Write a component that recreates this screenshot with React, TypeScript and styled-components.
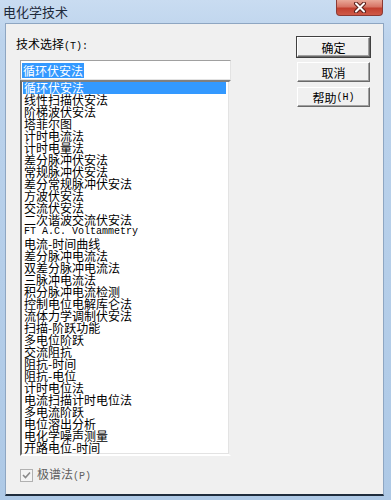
import { FC } from 'react';
import styled, { createGlobalStyle } from 'styled-components';

const GlobalStyle = createGlobalStyle`
    html, body {
        margin: 0;
        padding: 0;
        background: #6f8ba6;
    }
`;

const CJK = `"Noto Sans CJK SC", "DejaVu Sans", sans-serif`;

const Window = styled.div`
    width: 391px;
    height: 500px;
    box-sizing: border-box;
    display: flex;
    flex-direction: column;
    background: linear-gradient(180deg, #c9dcf1 0px, #bcd3ec 40px, #aec9e6 100%);
    font-family: ${CJK};
    overflow: hidden;
`;

const TitleBar = styled.div`
    height: 23px;
    display: flex;
    justify-content: space-between;
    align-items: flex-start;
    flex-shrink: 0;
`;

const Title = styled.span`
    font-size: 13px;
    line-height: 13px;
    color: #1e2a3a;
    margin: 5px 0 0 3px;
`;

const CloseButton = styled.div`
    width: 45px;
    height: 15px;
    margin-right: 8px;
    border: 1px solid #8c3a33;
    border-top: none;
    border-radius: 0 0 4px 4px;
    background: linear-gradient(180deg, #e9a898 0%, #d77566 45%, #c2402f 55%, #cf5a48 100%);
    display: flex;
    align-items: center;
    justify-content: center;
`;

const FrameBody = styled.div`
    display: flex;
    flex: 1;
    padding: 0 7px 0 5px;
`;

const Client = styled.div`
    flex: 1;
    height: 473px;
    box-sizing: border-box;
    background: #f0f0f0;
    border: 1px solid #8ea6c2;
    border-bottom: 2px solid #1f2d3d;
    display: flex;
    padding: 13px 0 0 10px;
`;

const LeftColumn = styled.div`
    width: 215px;
    display: flex;
    flex-direction: column;
`;

const Label = styled.div`
    font-size: 12px;
    line-height: 13px;
    height: 13px;
    color: #000;
`;

const Half = styled.span`
    font-family: "Liberation Mono", "DejaVu Sans Mono", monospace;
    font-size: 10px;
`;

const EditBox = styled.div`
    margin: 10px 0 0 4px;
    width: 211px;
    height: 20px;
    box-sizing: border-box;
    background: #fff;
    border: 1px solid;
    border-color: #a0a0a0 #e3e3e3 #e3e3e3 #a0a0a0;
    display: flex;
    align-items: center;
    padding-left: 1px;
`;

const Selected = styled.span`
    background: #3399ff;
    color: #fff;
    font-size: 12px;
    line-height: 15px;
    height: 15px;
    padding: 0 1px;
`;

const ListBox = styled.div`
    margin-left: 4px;
    width: 211px;
    height: 376px;
    box-sizing: border-box;
    background: #fff;
    border: 2px solid;
    border-color: #808080 #f0f0f0 #ffffff #696969;
    box-shadow: inset -1px -1px 0 #e3e3e3;
    display: flex;
    flex-direction: column;
    padding: 0 3px 0 1px;
    overflow: hidden;
`;

const Item = styled.div<{ $active?: boolean }>`
    height: 12px;
    line-height: 12px;
    font-size: 12px;
    padding-left: 1px;
    white-space: nowrap;
    color: ${p => (p.$active ? '#fff' : '#000')};
    background: ${p => (p.$active ? '#3399ff' : 'transparent')};
`;

const LatinItem = styled(Item)`
    font-family: "Liberation Mono", "DejaVu Sans Mono", monospace;
    font-size: 10px;
`;

const CheckRow = styled.div`
    margin: 11px 0 0 4px;
    display: flex;
    align-items: center;
    gap: 4px;
    color: #5f5f5f;
    font-size: 12px;
    line-height: 13px;
`;

const CheckBox = styled.div`
    width: 11px;
    height: 11px;
    border: 1px solid #b1b1b1;
    background: #f4f4f4;
    display: flex;
    align-items: center;
    justify-content: center;
`;

const ButtonColumn = styled.div`
    margin-left: 66px;
    display: flex;
    flex-direction: column;
    gap: 5px;
`;

const Button = styled.div<{ $default?: boolean }>`
    width: 73px;
    height: 20px;
    box-sizing: border-box;
    display: flex;
    align-items: center;
    justify-content: center;
    font-size: 12px;
    color: #000;
    background: #f0f0f0;
    border: 1px solid;
    border-color: #ffffff #696969 #696969 #ffffff;
    box-shadow: ${p => (p.$default ? '0 0 0 1px #404040, inset -1px -1px 0 #a0a0a0' : 'inset -1px -1px 0 #a0a0a0')};
`;

const items = [
    '循环伏安法',
    '线性扫描伏安法',
    '阶梯波伏安法',
    '塔菲尔图',
    '计时电流法',
    '计时电量法',
    '差分脉冲伏安法',
    '常规脉冲伏安法',
    '差分常规脉冲伏安法',
    '方波伏安法',
    '交流伏安法',
    '二次谐波交流伏安法',
    'FT A.C. Voltammetry',
    '电流-时间曲线',
    '差分脉冲电流法',
    '双差分脉冲电流法',
    '三脉冲电流法',
    '积分脉冲电流检测',
    '控制电位电解库仑法',
    '流体力学调制伏安法',
    '扫描-阶跃功能',
    '多电位阶跃',
    '交流阻抗',
    '阻抗-时间',
    '阻抗-电位',
    '计时电位法',
    '电流扫描计时电位法',
    '多电流阶跃',
    '电位溶出分析',
    '电化学噪声测量',
    '开路电位-时间',
];

export default function App() {
    return (
        <>
            <GlobalStyle />
            <Window>
                <TitleBar>
                    <Title>电化学技术</Title>
                    <CloseButton>
                        <svg width="14" height="11" viewBox="0 0 14 11">
                            <path d="M3 1.5 L11 9.5 M11 1.5 L3 9.5" stroke="#5a1f1a" strokeWidth="4" strokeLinecap="round" />
                            <path d="M3 1.5 L11 9.5 M11 1.5 L3 9.5" stroke="#ffffff" strokeWidth="2" strokeLinecap="round" />
                        </svg>
                    </CloseButton>
                </TitleBar>
                <FrameBody>
                    <Client>
                        <LeftColumn>
                            <Label>技术选择<Half>(T):</Half></Label>
                            <EditBox>
                                <Selected>循环伏安法</Selected>
                            </EditBox>
                            <ListBox>
                                {items.map((name, i) =>
                                    /^[A-Z]/.test(name) ? (
                                        <LatinItem key={name}>{name}</LatinItem>
                                    ) : (
                                        <Item key={name} $active={i === 0}>{name}</Item>
                                    )
                                )}
                            </ListBox>
                            <CheckRow>
                                <CheckBox>
                                    <svg width="9" height="9" viewBox="0 0 9 9">
                                        <path d="M1 4 L3.5 6.5 L8 1.5" stroke="#8a8a8a" strokeWidth="1.6" fill="none" />
                                    </svg>
                                </CheckBox>
                                <span>极谱法<Half>(P)</Half></span>
                            </CheckRow>
                        </LeftColumn>
                        <ButtonColumn>
                            <Button $default>确定</Button>
                            <Button>取消</Button>
                            <Button>帮助<Half>(H)</Half></Button>
                        </ButtonColumn>
                    </Client>
                </FrameBody>
            </Window>
        </>
    );
}
